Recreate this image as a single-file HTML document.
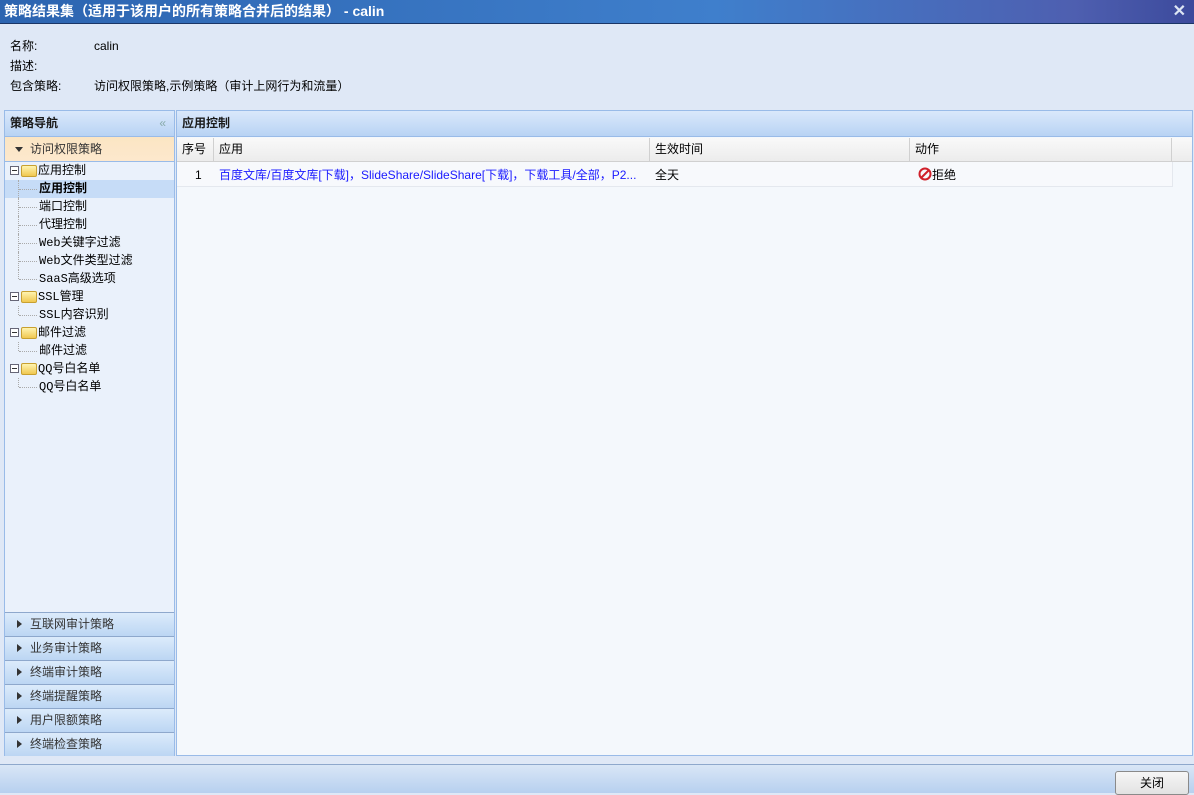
<!DOCTYPE html>
<html><head><meta charset="utf-8"><style>
*{margin:0;padding:0;box-sizing:border-box}
body{width:1194px;height:793px;overflow:hidden;background:#dfe8f6;font-family:"Liberation Sans","Noto Sans CJK SC",sans-serif;font-size:12px;color:#000;position:relative}
.title{position:absolute;left:0;top:0;width:1194px;height:24px;background:linear-gradient(90deg,#2c64b0,#3f7fcc 60%,#4e5fb0 90%,#3c4a9c);border-bottom:1px solid #1a3566;color:#fff;font-weight:bold;font-size:14px;line-height:23px;padding-left:4px}
.close{position:absolute;right:8px;top:0;font-size:16px;color:#dde6f4;line-height:23px}
.info{position:absolute;left:10px;font-size:12px;line-height:16px}
.info span{position:absolute;left:84px;white-space:nowrap}
.panel{position:absolute;top:110px;border:1px solid #99bbe8;background:#f4f8fc}
.ph{height:26px;background:linear-gradient(#dae8fb,#b8d3f4);border-bottom:1px solid #99bbe8;font-weight:bold;line-height:25px;padding-left:5px;color:#1a1a1a}
.left{left:4px;width:171px;height:646px;background:#eaf1fb}
.right{left:176px;width:1017px;height:646px}
.acc{height:25px;background:linear-gradient(#fbe5c3,#fde8cd);border-bottom:1px solid #99bbe8;line-height:24px;padding-left:25px;color:#333;position:relative;font-size:12px}
.tri{position:absolute;left:10px;top:10px;width:0;height:0;border-left:4px solid transparent;border-right:4px solid transparent;border-top:5px solid #333}
.tr{height:18px;line-height:18px;position:relative;white-space:nowrap;font-family:"Liberation Mono","Noto Sans CJK SC",monospace;font-size:12px}
.tr.l1{padding-left:33px}
.tr.l2{padding-left:34px}
.tr.sel{background:#c6dcf7;font-weight:bold}
.tr .dot{position:absolute;left:13px;top:0;height:18px;border-left:1px dotted #aaa}
.tr .h{position:absolute;left:14px;top:9px;width:18px;border-top:1px dotted #aaa}
.pm{position:absolute;left:5px;top:4px;width:9px;height:9px;border:1px solid #667;background:#fff}
.pm:after{content:"";position:absolute;left:1px;top:3px;width:5px;height:1px;background:#333}
.fold{position:absolute;left:16px;top:3px;width:16px;height:12px;background:linear-gradient(#fff4b0,#f0c850);border:1px solid #c8a030;border-radius:2px}
.bh{position:absolute;left:0;width:169px;height:24px;background:linear-gradient(#dcebfb,#bcd6f3);border-top:1px solid #8ea8cc;line-height:23px;padding-left:25px;color:#333}
.bh:before{content:"";position:absolute;left:12px;top:7px;border-top:4px solid transparent;border-bottom:4px solid transparent;border-left:5px solid #333}
.gh{position:absolute;top:27px;left:0;width:1015px;height:24px;background:linear-gradient(#f9f9f9,#ececec);border-bottom:1px solid #d0d0d0}
.gh div{position:absolute;top:0;height:23px;line-height:23px;padding-left:5px;border-right:1px solid #d0d0d0}
.row{position:absolute;top:51px;left:0;width:996px;height:25px;border-bottom:1px solid #e4e8ee;border-right:1px solid #e4e8ee;background:#f7f9fc}
.row div{position:absolute;top:1px;line-height:25px;padding-left:5px;white-space:nowrap}
.foot{position:absolute;left:0;top:764px;width:1194px;height:29px;background:linear-gradient(#d9e6f6,#b7d0ef);border-top:1px solid #8ea8cc}
.btn{position:absolute;left:1115px;top:6px;width:74px;height:24px;border:1px solid #8a8a8a;border-radius:3px;background:linear-gradient(#f6f6f6,#e2e2e2);text-align:center;line-height:22px}
</style></head><body>
<div class="title">策略结果集（适用于该用户的所有策略合并后的结果） - calin<span class="close">✕</span></div>
<div class="info" style="top:38px">名称:<span>calin</span></div>
<div class="info" style="top:58px">描述:</div>
<div class="info" style="top:78px">包含策略:<span>访问权限策略,示例策略（审计上网行为和流量）</span></div>

<div class="panel left">
<div class="ph">策略导航<span style="position:absolute;right:8px;top:0;color:#8aa;font-weight:normal">«</span></div>
<div class="acc"><span class="tri"></span>访问权限策略</div>
<div class="tr l1"><span class="pm"></span><span class="fold"></span>应用控制</div>
<div class="tr l2 sel"><span class="dot"></span><span class="h"></span>应用控制</div>
<div class="tr l2"><span class="dot"></span><span class="h"></span>端口控制</div>
<div class="tr l2"><span class="dot"></span><span class="h"></span>代理控制</div>
<div class="tr l2"><span class="dot"></span><span class="h"></span>Web关键字过滤</div>
<div class="tr l2"><span class="dot"></span><span class="h"></span>Web文件类型过滤</div>
<div class="tr l2"><span class="dot" style="height:9px"></span><span class="h"></span>SaaS高级选项</div>
<div class="tr l1"><span class="pm"></span><span class="fold"></span>SSL管理</div>
<div class="tr l2"><span class="dot" style="height:9px"></span><span class="h"></span>SSL内容识别</div>
<div class="tr l1"><span class="pm"></span><span class="fold"></span>邮件过滤</div>
<div class="tr l2"><span class="dot" style="height:9px"></span><span class="h"></span>邮件过滤</div>
<div class="tr l1"><span class="pm"></span><span class="fold"></span>QQ号白名单</div>
<div class="tr l2"><span class="dot" style="height:9px"></span><span class="h"></span>QQ号白名单</div>
<div class="bh" style="top:501px">互联网审计策略</div>
<div class="bh" style="top:525px">业务审计策略</div>
<div class="bh" style="top:549px">终端审计策略</div>
<div class="bh" style="top:573px">终端提醒策略</div>
<div class="bh" style="top:597px">用户限额策略</div>
<div class="bh" style="top:621px">终端检查策略</div>
</div>

<div class="panel right">
<div class="ph">应用控制</div>
<div class="gh">
<div style="left:0;width:37px">序号</div>
<div style="left:37px;width:436px">应用</div>
<div style="left:473px;width:260px">生效时间</div>
<div style="left:733px;width:262px">动作</div>
</div>
<div class="row">
<div style="left:13px">1</div>
<div style="left:37px;color:#1a1aff">百度文库/百度文库[下载]，SlideShare/SlideShare[下载]，下载工具/全部，P2...</div>
<div style="left:473px">全天</div>
<div style="left:736px;padding-left:5px"><svg width="14" height="14" viewBox="0 0 14 14" style="vertical-align:-2px"><circle cx="7" cy="7" r="5.5" fill="none" stroke="#d0202a" stroke-width="2"/><line x1="3" y1="11" x2="11" y2="3" stroke="#d0202a" stroke-width="2"/></svg>拒绝</div>
</div>
</div>

<div class="foot"><div class="btn">关闭</div></div>
</body></html>
